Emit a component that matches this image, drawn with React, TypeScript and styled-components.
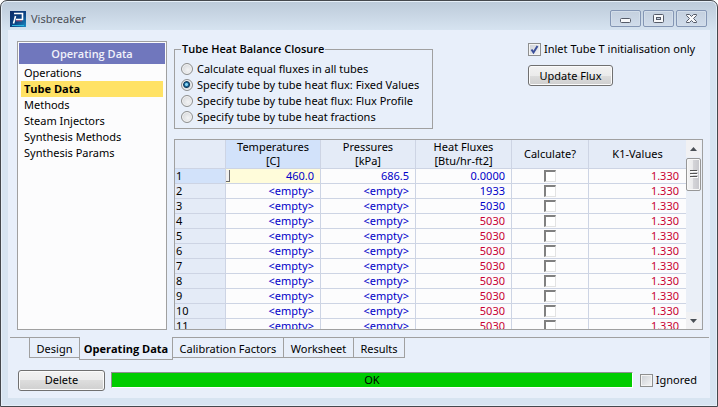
import React, { useState } from 'react';
import styled, { createGlobalStyle, css } from 'styled-components';

const GlobalStyle = createGlobalStyle`
  *, *::before, *::after { box-sizing: border-box; }
  body {
    margin: 0;
    background: #ffffff;
    color: #000000;
    font-family: "Noto Sans", "Open Sans", sans-serif;
    font-size: 11px;
    line-height: 16px;
  }
  button, input { font: inherit; color: inherit; margin: 0; }
`;

const line = '#a0a0a0';
const gridLine = '#cdd4e4';

const strong = css`
  font-family: "Open Sans", "Noto Sans", sans-serif;
  font-weight: 700;
`;

const Window = styled.div`
  display: flex;
  flex-direction: column;
  height: 100vh;
  min-height: 320px;
  padding: 0 7px 8px;
  border: 1px solid #45484d;
  border-radius: 7px 7px 0 0;
  background: linear-gradient(#bccad9, #d7e4f1 30px);
  box-shadow: inset 0 0 0 1px #e6eff8;
`;

const TitleBar = styled.header`
  display: flex;
  align-items: center;
  flex: none;
  height: 29px;
  padding: 6px 3px 0 2px;
`;

const Title = styled.h1`
  flex: 1;
  margin: 0 0 0 5px;
  color: #4a4e55;
  font-size: 11px;
  font-weight: 400;
`;

const WindowButtons = styled.div`
  display: flex;
  gap: 2px;
`;

const WindowButton = styled.button`
  display: flex;
  align-items: center;
  justify-content: center;
  width: 31px;
  height: 17px;
  padding: 0;
  border: 1px solid #8496b4;
  border-radius: 2px;
  background: linear-gradient(#c4d0de, #d0dceb);
  box-shadow: inset 0 0 0 1px #d3deea;
`;

const Body = styled.main`
  display: flex;
  flex: 1;
  flex-direction: column;
  min-height: 0;
  background: #e8effa;
`;

const Content = styled.div`
  display: flex;
  flex: 1;
  gap: 7px;
  min-height: 0;
  padding: 11px 7px 0 9px;
`;

const Sidebar = styled.nav`
  flex: none;
  width: 150px;
  padding: 1px;
  border: 1px solid ${line};
  background: #fcfcfd;
`;

const SidebarTitle = styled.h2`
  ${strong}
  margin: 0 0 1px;
  padding: 3px 0 2px;
  background: #7077bd;
  color: #f0f2fa;
  font-size: 11px;
  font-weight: 600;
  text-align: center;
`;

const SidebarList = styled.ul`
  margin: 0;
  padding: 0 2px;
  list-style: none;
`;

const SidebarItem = styled.button<{ $active: boolean }>`
  display: block;
  width: 100%;
  height: 16px;
  padding: 0 3px;
  border: 0;
  background: ${p => (p.$active ? '#ffe265' : 'transparent')};
  line-height: 16px;
  text-align: left;
  ${p => p.$active && strong}
`;

const Workspace = styled.section`
  display: flex;
  flex: 1;
  flex-direction: column;
  gap: 10px;
  min-width: 0;
`;

const Options = styled.div`
  display: flex;
  flex: none;
  align-items: flex-start;
  justify-content: space-between;
`;

const Closure = styled.fieldset`
  width: 259px;
  height: 88px;
  margin: 0;
  padding: 4px 6px;
  border: 1px solid ${line};
`;

const Legend = styled.legend`
  ${strong}
  font-weight: 600;
  padding: 0 1px;
`;

const RadioLabel = styled.label`
  display: flex;
  align-items: center;
  gap: 4px;
  height: 16px;
  white-space: nowrap;
`;

const Radio = styled.input`
  appearance: none;
  flex: none;
  width: 12px;
  height: 12px;
  border: 1px solid #8e8f8f;
  border-radius: 50%;
  background: radial-gradient(circle at 60% 60%, #f4f4f5, #cdd0d4);
  box-shadow: inset 0 0 0 1px #f4f4f4;
  &:checked {
    background: radial-gradient(circle at 45% 45%, #8bd6f2 0 1px, #19689b 2px, #123a5c 3px, #d7dce0 4px);
  }
`;

const SideOptions = styled.div`
  display: flex;
  flex-direction: column;
  gap: 8px;
  width: 175px;
`;

const CheckLabel = styled.label`
  display: flex;
  align-items: center;
  gap: 3px;
  white-space: nowrap;
`;

const CheckBox = styled.span`
  display: grid;
  flex: none;
  width: 13px;
  height: 13px;
  > * { grid-area: 1 / 1; }
  > svg { pointer-events: none; visibility: hidden; }
  > input:checked + svg { visibility: visible; }
`;

const CheckInput = styled.input`
  appearance: none;
  width: 13px;
  height: 13px;
  border: 1px solid #8e8f8f;
  background: linear-gradient(135deg, #cbcfd5, #f6f6f6);
  box-shadow: inset 0 0 0 1px #f4f4f4;
`;

const PushButton = styled.button<{ $width: number }>`
  flex: none;
  width: ${p => p.$width}px;
  height: 21px;
  padding: 0;
  border: 1px solid #707070;
  border-radius: 3px;
  background: linear-gradient(#f2f2f2, #ebebeb 50%, #dddddd 50%, #cfcfcf);
  box-shadow: inset 0 0 0 1px #fbfbfb;
`;

const GridFrame = styled.div`
  display: flex;
  flex: 1;
  min-height: 0;
  border: 1px solid ${line};
  background: #fcfcfd;
`;

const GridView = styled.div`
  flex: 1;
  min-width: 0;
  overflow: hidden;
`;

const Table = styled.table`
  width: 100%;
  border-collapse: separate;
  border-spacing: 0;
  table-layout: fixed;
`;

const Col = styled.col<{ $width: number }>`
  width: ${p => p.$width}px;
`;

const cell = css`
  padding: 0;
  border: 0 solid ${gridLine};
  border-width: 0 1px 1px 0;
  white-space: nowrap;
  &:last-child { border-right-width: 0; }
`;

const HeadCell = styled.th<{ $active?: boolean }>`
  ${cell}
  height: 29px;
  background: ${p => (p.$active ? '#d2e2fa' : '#e4ebf7')};
  font-weight: 400;
  line-height: 14px;
`;

const RowHead = styled.th<{ $active: boolean }>`
  ${cell}
  height: 15px;
  padding-left: 1px;
  background: ${p => (p.$active ? '#d2e2fa' : '#e4ebf7')};
  font-weight: 400;
  line-height: 14px;
  text-align: left;
`;

const Value = styled.td<{ $tone: 'input' | 'computed'; $editing?: boolean }>`
  ${cell}
  height: 15px;
  padding-right: 6px;
  background: ${p => (p.$editing ? '#fffcda' : 'transparent')};
  color: ${p => (p.$tone === 'input' ? '#0000c8' : '#c80032')};
  line-height: 14px;
  text-align: right;
  &:last-child { padding-right: 7px; }
`;

const EditValue = styled.span`
  display: flex;
  align-items: center;
  justify-content: space-between;
  &::before {
    content: "";
    width: 4px;
    height: 12px;
    border: solid #6a6a6a;
    border-width: 0 1px 1px 0;
    background: #f0f0f0;
  }
`;

const CheckCell = styled.td`
  ${cell}
  height: 15px;
  line-height: 0;
  text-align: center;
`;

const GridCheck = styled.input`
  appearance: none;
  width: 12px;
  height: 12px;
  border: 1px solid #e3e3e3;
  border-top: 2px solid #808080;
  border-left: 2px solid #808080;
  background: #ffffff;
  vertical-align: top;
`;

const ScrollBar = styled.div`
  display: flex;
  flex: none;
  flex-direction: column;
  width: 16px;
  padding-right: 1px;
  background: #eaeff7;
`;

const ScrollArrow = styled.button`
  display: flex;
  align-items: center;
  justify-content: center;
  height: 17px;
  padding: 0;
  border: 0;
  background: #f1f1f3;
`;

const ScrollTrack = styled.div`
  flex: 1;
  padding-top: 1px;
`;

const ScrollThumb = styled.div`
  display: flex;
  align-items: center;
  justify-content: center;
  height: 33px;
  border: 1px solid #979797;
  border-radius: 2px;
  background: linear-gradient(90deg, #f5f5f5, #e9e9eb 50%, #d4d4d8 50%, #c6c6cb);
  box-shadow: inset 0 0 0 1px #f8f8f8;
`;

const Tabs = styled.div`
  display: flex;
  flex: none;
  align-items: flex-start;
  height: 25px;
  margin: 7px 1px 0 2px;
  padding-left: 19px;
  border-top: 1px solid ${line};
`;

const Tab = styled.button<{ $active: boolean; $width: number }>`
  flex: none;
  width: ${p => p.$width}px;
  height: ${p => (p.$active ? 23 : 20)}px;
  margin-top: ${p => (p.$active ? -1 : 0)}px;
  padding: ${p => (p.$active ? '1px 0 0' : '3px 0 0')};
  border: 1px solid ${line};
  border-top: 0;
  background: #e8effa;
  white-space: nowrap;
  ${p => p.$active && strong}
  & + & { margin-left: -1px; }
`;

const Footer = styled.footer`
  display: flex;
  flex: none;
  align-items: center;
  gap: 6px;
  height: 36px;
  padding: 0 13px 0 10px;
`;

const Status = styled.output`
  flex: 1;
  height: 16px;
  border: 1px solid #ffffff;
  border-top-color: #909090;
  border-left-color: #909090;
  background: #00cc00;
  line-height: 14px;
  text-align: center;
`;

const IgnoredLabel = styled(CheckLabel)`
  margin-left: 1px;
`;

const Logo = () => (
  <svg width="16" height="16" viewBox="0 0 16 16" aria-hidden="true">
    <defs>
      <linearGradient id="logo" x1="0" y1="0" x2="1" y2="1">
        <stop offset="0" stopColor="#0a2a66" />
        <stop offset="0.55" stopColor="#0b4384" />
        <stop offset="1" stopColor="#1f8fc6" />
      </linearGradient>
    </defs>
    <rect width="16" height="16" fill="url(#logo)" />
    <path d="M2 14.500H14" fill="none" stroke="#2fb5dd" />
    <path d="M4 2.500H12.500V8.500H6" fill="none" stroke="#ffffff" strokeWidth="1.600" />
    <path d="M5.500 5L4.500 9L3.500 12.500" fill="none" stroke="#ffffff" strokeWidth="1.600" />
    <path d="M6 9.800H12" stroke="#d8455c" strokeWidth=".8" />
  </svg>
);

const MinimizeIcon = () => (
  <svg width="13" height="13" viewBox="0 0 13 13" aria-hidden="true">
    <rect x="1.500" y="6.500" width="10" height="4" rx="1" fill="#f8f9fb" stroke="#555b68" />
  </svg>
);

const MaximizeIcon = () => (
  <svg width="13" height="13" viewBox="0 0 13 13" aria-hidden="true">
    <rect x="1.500" y="2.500" width="10" height="8" rx="1" fill="#f8f9fb" stroke="#555b68" />
    <rect x="4.500" y="5.500" width="4" height="2" fill="#c5d0de" stroke="#555b68" />
  </svg>
);

const CloseIcon = () => (
  <svg width="13" height="13" viewBox="0 0 13 13" aria-hidden="true">
    <path d="M1.500 2.500h3l2 2 2-2h3v1L8.500 6.500l3 3v1h-3l-2-2-2 2h-3v-1l3-3-3-3z" fill="#f8f9fb" stroke="#555b68" strokeLinejoin="round" />
  </svg>
);

const CheckMark = () => (
  <svg width="13" height="13" viewBox="0 0 13 13" aria-hidden="true">
    <path d="M3.500 6.500l2 3L9.500 3" fill="none" stroke="#3b4f9a" strokeWidth="2" />
  </svg>
);

const Arrow = ({ down = false }: { down?: boolean }) => (
  <svg width="7" height="4" viewBox="0 0 7 4" aria-hidden="true">
    <path d={down ? 'M0 0h7L3.500 4z' : 'M0 4h7L3.500 0z'} fill="#4a4f55" />
  </svg>
);

const Grip = () => (
  <svg width="8" height="9" viewBox="0 0 8 9" aria-hidden="true">
    <path d="M0 .5h7M0 3.500h7M0 6.500h7" stroke="#555" />
    <path d="M1 1.500h7M1 4.500h7M1 7.500h7" stroke="#fff" />
  </svg>
);

const sections = ['Operations', 'Tube Data', 'Methods', 'Steam Injectors', 'Synthesis Methods', 'Synthesis Params'];

const closures = [
  'Calculate equal fluxes in all tubes',
  'Specify tube by tube heat flux: Fixed Values',
  'Specify tube by tube heat flux: Flux Profile',
  'Specify tube by tube heat fractions',
];

const tabs = [
  { label: 'Design', width: 51 },
  { label: 'Operating Data', width: 94 },
  { label: 'Calibration Factors', width: 112 },
  { label: 'Worksheet', width: 71 },
  { label: 'Results', width: 52 },
];

const rows = Array.from({ length: 11 }, (_, i) => ({
  id: i + 1,
  temperature: i === 0 ? '460.0' : '<empty>',
  pressure: i === 0 ? '686.5' : '<empty>',
  flux: ['0.0000', '1933'][i] ?? '5030',
  fluxTone: i < 3 ? ('input' as const) : ('computed' as const),
  k1: '1.330',
}));

export default function App() {
  const [section, setSection] = useState('Tube Data');
  const [closure, setClosure] = useState(closures[1]);
  const [tab, setTab] = useState('Operating Data');

  return (
    <>
      <GlobalStyle />
      <Window>
        <TitleBar>
          <Logo />
          <Title>Visbreaker</Title>
          <WindowButtons>
            <WindowButton aria-label="Minimize"><MinimizeIcon /></WindowButton>
            <WindowButton aria-label="Maximize"><MaximizeIcon /></WindowButton>
            <WindowButton aria-label="Close"><CloseIcon /></WindowButton>
          </WindowButtons>
        </TitleBar>
        <Body>
          <Content>
            <Sidebar>
              <SidebarTitle>Operating Data</SidebarTitle>
              <SidebarList>
                {sections.map(name => (
                  <li key={name}>
                    <SidebarItem $active={name === section} onClick={() => setSection(name)}>{name}</SidebarItem>
                  </li>
                ))}
              </SidebarList>
            </Sidebar>
            <Workspace>
              <Options>
                <Closure>
                  <Legend>Tube Heat Balance Closure</Legend>
                  {closures.map(name => (
                    <RadioLabel key={name}>
                      <Radio type="radio" name="closure" checked={name === closure} onChange={() => setClosure(name)} />
                      {name}
                    </RadioLabel>
                  ))}
                </Closure>
                <SideOptions>
                  <CheckLabel>
                    <CheckBox><CheckInput type="checkbox" defaultChecked /><CheckMark /></CheckBox>
                    Inlet Tube T initialisation only
                  </CheckLabel>
                  <PushButton $width={85}>Update Flux</PushButton>
                </SideOptions>
              </Options>
              <GridFrame>
                <GridView>
                  <Table>
                    <colgroup>
                      <Col $width={51} />
                      <Col $width={95} />
                      <Col $width={95} />
                      <Col $width={96} />
                      <Col $width={77} />
                      <Col $width={97} />
                    </colgroup>
                    <thead>
                      <tr>
                        <HeadCell />
                        <HeadCell scope="col" $active>Temperatures<br />[C]</HeadCell>
                        <HeadCell scope="col">Pressures<br />[kPa]</HeadCell>
                        <HeadCell scope="col">Heat Fluxes<br />[Btu/hr-ft2]</HeadCell>
                        <HeadCell scope="col">Calculate?</HeadCell>
                        <HeadCell scope="col">K1-Values</HeadCell>
                      </tr>
                    </thead>
                    <tbody>
                      {rows.map(row => (
                        <tr key={row.id}>
                          <RowHead scope="row" $active={row.id === 1}>{row.id}</RowHead>
                          <Value $tone="input" $editing={row.id === 1}>
                            {row.id === 1 ? <EditValue>{row.temperature}</EditValue> : row.temperature}
                          </Value>
                          <Value $tone="input">{row.pressure}</Value>
                          <Value $tone={row.fluxTone}>{row.flux}</Value>
                          <CheckCell><GridCheck type="checkbox" aria-label={`Calculate tube ${row.id}`} /></CheckCell>
                          <Value $tone="computed">{row.k1}</Value>
                        </tr>
                      ))}
                    </tbody>
                  </Table>
                </GridView>
                <ScrollBar>
                  <ScrollArrow aria-label="Scroll up"><Arrow /></ScrollArrow>
                  <ScrollTrack><ScrollThumb><Grip /></ScrollThumb></ScrollTrack>
                  <ScrollArrow aria-label="Scroll down"><Arrow down /></ScrollArrow>
                </ScrollBar>
              </GridFrame>
            </Workspace>
          </Content>
          <Tabs role="tablist">
            {tabs.map(({ label, width }) => (
              <Tab key={label} role="tab" aria-selected={label === tab} $active={label === tab} $width={width} onClick={() => setTab(label)}>
                {label}
              </Tab>
            ))}
          </Tabs>
          <Footer>
            <PushButton $width={87}>Delete</PushButton>
            <Status>OK</Status>
            <IgnoredLabel>
              <CheckBox><CheckInput type="checkbox" /><CheckMark /></CheckBox>
              Ignored
            </IgnoredLabel>
          </Footer>
        </Body>
      </Window>
    </>
  );
}
